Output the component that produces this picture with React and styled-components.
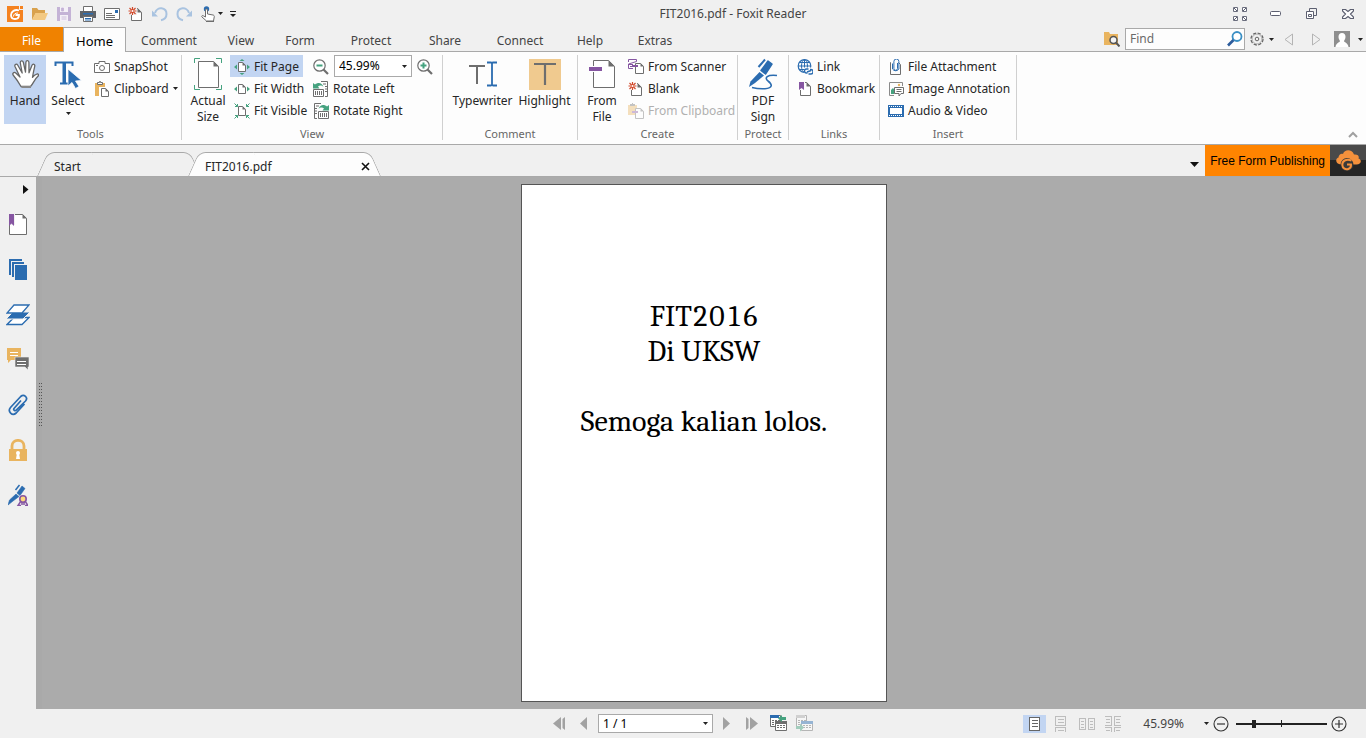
import { useState } from "react";
import styled, { createGlobalStyle, css } from "styled-components";

const GREY = "#6e6e6e";
const GREEN = "#45a27f";
const BLUE = "#2b6cb0";
const ORANGE = "#e9b45f";
const PURPLE = "#8656a2";
const RED = "#d2492a";

const GlobalStyle = createGlobalStyle`
  * {
    box-sizing: border-box;
  }
  body {
    margin: 0;
    background: #f0f0f0;
    color: #262626;
    font-family: "Noto Sans", "Open Sans", sans-serif;
    font-size: 12px;
    line-height: 16px;
  }
  button, input, select {
    margin: 0;
    padding: 0;
    border: 0;
    border-radius: 0;
    background: none;
    color: inherit;
    font: inherit;
  }
  svg {
    display: block;
    flex: none;
  }
`;

const Window = styled.div`
  display: flex;
  flex-direction: column;
  height: 100vh;
`;

/* title bar */
const TitleBar = styled.header`
  display: flex;
  align-items: center;
  height: 27px;
`;
const QuickAccess = styled.div`
  display: flex;
  align-items: center;
  width: 244px;
  padding-left: 1px;
`;
const ToolButton = styled.button`
  display: flex;
  align-items: center;
  justify-content: center;
  gap: ${(p) => p.$gap || 0}px;
  width: ${(p) => p.$width || 24}px;
  height: 24px;
`;
const Title = styled.h1`
  flex: 1;
  margin: 0;
  font-size: 12px;
  font-weight: 400;
  text-align: center;
  color: #444;
`;
const WindowControls = styled.div`
  display: flex;
  align-items: center;
  height: 24px;
`;

/* ribbon tabs */
const TabBar = styled.nav`
  display: flex;
  height: 25px;
  border-bottom: 1px solid #a9a9a9;
`;
const RibbonTab = styled.button`
  width: ${(p) => p.$width}px;
  height: 25px;
  padding-top: 2px;
  color: #444;
  ${(p) =>
    p.$active &&
    css`
      border: 1px solid #a9a9a9;
      border-bottom: 0;
      padding-top: 1px;
      background: #fdfdfd;
      color: #000;
      font-size: 13px;
    `}
`;
const FileTab = styled(RibbonTab)`
  height: 24px;
  padding-top: 3px;
  background: #f08200;
  color: #fff;
`;
const TabTools = styled.div`
  display: flex;
  align-items: center;
  margin-left: auto;
  height: 24px;
`;
const FindBox = styled.label`
  display: flex;
  align-items: center;
  width: 120px;
  height: 22px;
  margin: 0 5px 0 1px;
  padding: 0 1px 0 4px;
  border: 1px solid #a9a9a9;
  background: #fdfdfd;
`;
const FindInput = styled.input`
  flex: 1;
  min-width: 0;
  outline: 0;
  &::placeholder {
    color: #6a6a6a;
    opacity: 1;
  }
`;

/* ribbon */
const Ribbon = styled.section`
  display: flex;
  height: 93px;
  border-bottom: 1px solid #a9a9a9;
  background: #fdfdfd;
`;
const Group = styled.section`
  display: flex;
  flex-direction: column;
  flex: none;
  width: ${(p) => p.$width}px;
  margin: 3px 0 4px;
  border-right: 1px solid #d0d0d0;
`;
const GroupBody = styled.div`
  display: flex;
  flex: none;
  height: 72px;
  padding-left: ${(p) => p.$pad || 4}px;
`;
const GroupLabel = styled.h2`
  margin: 0;
  font-size: 11px;
  font-weight: 400;
  line-height: 13px;
  text-align: center;
  color: #666;
`;
const Column = styled.div`
  display: flex;
  flex-direction: column;
  align-items: flex-start;
  width: ${(p) => (p.$width ? `${p.$width}px` : "auto")};
`;
const Row = styled.div`
  display: flex;
  align-items: center;
  height: 22px;
`;
const SmallButton = styled.button`
  display: flex;
  align-items: center;
  gap: 4px;
  height: 22px;
  padding: 1px 4px 0;
  white-space: nowrap;
  background: ${(p) => (p.$active ? "#c2d5f2" : "none")};
  &:disabled {
    color: #b0b0b0;
  }
`;
const LargeButton = styled.button`
  display: flex;
  flex-direction: column;
  align-items: center;
  gap: 3px;
  flex: none;
  width: ${(p) => p.$width}px;
  height: 69px;
  padding-top: 3px;
  background: ${(p) => (p.$active ? "#c2d5f2" : "none")};
`;
const ComboBox = styled.span`
  display: flex;
  align-items: center;
  width: ${(p) => p.$width}px;
  height: ${(p) => p.$height}px;
  margin: 0 ${(p) => p.$margin || 0}px;
  padding: 0 4px;
  border: 1px solid #a9a9a9;
  background: #fff;
  color: #000;
`;
const ComboSelect = styled.select`
  flex: 1;
  min-width: 0;
  appearance: none;
  outline: 0;
`;
const CollapseRibbon = styled.button`
  align-self: flex-end;
  margin: 0 8px 5px auto;
`;

/* document tabs */
const DocumentBar = styled.div`
  display: flex;
  align-items: flex-end;
  height: 32px;
  border-bottom: 1px solid #a9a9a9;
`;
const DocumentTabs = styled.div`
  display: flex;
  padding-left: 37px;
`;
const DocumentTab = styled.div`
  position: relative;
  isolation: isolate;
  display: flex;
  align-items: center;
  justify-content: space-between;
  width: ${(p) => p.$width}px;
  height: 24px;
  padding: 5px 11px 0 17px;
  & + & {
    margin-left: -13px;
  }
  &::before,
  &::after {
    content: "";
    position: absolute;
    z-index: -1;
    top: 0;
    bottom: 0;
    width: 60%;
    border-top: 1px solid #a9a9a9;
    background: ${(p) => (p.$active ? "#fdfdfd" : "#f0f0f0")};
  }
  &::before {
    left: 0;
    border-left: 1px solid #a9a9a9;
    border-top-left-radius: 7px;
    transform: skewX(-24deg);
    transform-origin: bottom left;
  }
  &::after {
    right: 0;
    border-right: 1px solid #a9a9a9;
    border-top-right-radius: 7px;
    transform: skewX(24deg);
    transform-origin: bottom right;
  }
`;
const Promo = styled.a`
  display: flex;
  align-items: center;
  height: 31px;
  padding: 0 5px;
  background: #ff8400;
  color: #000;
  font-family: "Liberation Sans", Arial, sans-serif;
  text-decoration: none;
  white-space: nowrap;
`;
const PromoLogo = styled.a`
  display: flex;
  align-items: center;
  justify-content: center;
  width: 36px;
  height: 31px;
  background: linear-gradient(#4a4a4a 50%, #252525 50%);
`;
const BarTail = styled.div`
  display: flex;
  align-items: flex-end;
  margin-left: auto;
`;

/* workspace */
const Workspace = styled.main`
  display: flex;
  flex: 1;
  min-height: 0;
`;
const SideBar = styled.aside`
  display: flex;
  flex-direction: column;
  align-items: center;
  width: 36px;
`;
const ExpandButton = styled.button`
  display: flex;
  align-items: center;
  align-self: flex-end;
  height: 25px;
  padding-right: 7px;
`;
const SideButton = styled.button`
  display: flex;
  align-items: center;
  justify-content: center;
  width: 36px;
  height: 45px;
`;
const Splitter = styled.div`
  width: 6px;
  padding: 206px 0 0 3px;
  background: #a9a9a9;
`;
const Canvas = styled.div`
  display: flex;
  justify-content: center;
  flex: 1;
  padding: 7px 0;
  background: #ababab;
  overflow: hidden;
`;
const Page = styled.article`
  width: 366px;
  padding-top: 114px;
  border: 1px solid #555;
  background: #fff;
  color: #000;
  font-family: Cambria, Caladea, "Liberation Serif", serif;
  font-size: 30px;
  font-variant-numeric: lining-nums tabular-nums;
  line-height: 35px;
  text-align: center;
`;
const Line = styled.p`
  min-height: 35px;
  margin: 0;
`;

/* status bar */
const StatusBar = styled.footer`
  display: grid;
  grid-template-columns: 1fr auto 1fr;
  align-items: center;
  height: 29px;
`;
const PageNav = styled.div`
  grid-column: 2;
  display: flex;
  align-items: center;
`;
const ViewTools = styled.div`
  display: flex;
  align-items: center;
  justify-content: flex-end;
  padding-right: 15px;
`;
const ModeButton = styled.button`
  display: flex;
  align-items: center;
  justify-content: center;
  width: 23px;
  height: 18px;
  margin-right: 3px;
  background: ${(p) => (p.$active ? "#c2d5f2" : "none")};
`;
const ZoomValue = styled.button`
  display: flex;
  align-items: center;
  gap: 20px;
  margin: 0 0 0 16px;
  color: #444;
`;
const Slider = styled.input`
  appearance: none;
  width: 91px;
  height: 10px;
  margin: 0 0 0 3px;
  background:
    linear-gradient(#222, #222) 50% 50% / 1px 7px no-repeat,
    linear-gradient(#222, #222) 0 50% / 100% 2px no-repeat;
  &::-webkit-slider-thumb {
    appearance: none;
    width: 4px;
    height: 8px;
    background: #222;
  }
`;

const Icon = ({ w = 16, h = 16, children, ...rest }) => (
  <svg width={w} height={h} viewBox={`0 0 ${w} ${h}`} fill="none" aria-hidden="true" {...rest}>
    {children}
  </svg>
);

const Caret = ({ color = "#222" }) => (
  <Icon w={5} h={3}>
    <path d="M0 0h5L2.500 3z" fill={color} />
  </Icon>
);

const Sheet = ({ x = 0, y = 0, w = 10, h = 12, fold = 4, stroke = GREY, fill = "#fff" }) => (
  <g>
    <path d={`M${x + 0.5} ${y + 0.5}h${w - fold}l${fold} ${fold}v${h - fold}h-${w}z`} fill={fill} stroke={stroke} />
    <path d={`M${x + 0.5 + w - fold} ${y}v${fold + 0.5}h${fold + 0.5}z`} fill={stroke} />
  </g>
);

const Burst = ({ cx, cy, r = 4 }) => (
  <g stroke={RED} strokeWidth="1.2">
    <path d={`M${cx - r} ${cy}h${2 * r}M${cx} ${cy - r}v${2 * r}`} />
    <path d={`M${cx - r + 1} ${cy - r + 1}l${2 * r - 2} ${2 * r - 2}M${cx + r - 1} ${cy - r + 1}l-${2 * r - 2} ${2 * r - 2}`} />
    <circle cx={cx} cy={cy} r="1" fill="#fff" stroke="none" />
  </g>
);

const LogoIcon = () => (
  <Icon>
    <path d="M0 0h12v4h4v12H0z" fill="#f5821f" />
    <path d="M13 0h3v3h-3z" fill="#f5821f" />
    <path d="M12 4.500C8 3 4 5.500 4 9c0 2.500 1.800 4 4 4 2.500 0 4-1.800 4-4H8.500" stroke="#fff" strokeWidth="1.800" />
    <path d="M6.500 10.500C6.500 8 8.500 7 11 7" stroke="#fff" />
  </Icon>
);
const OpenIcon = () => (
  <Icon>
    <path d="M0 14V2h5l1.500 2H13v3H4z" fill="#d9a24e" />
    <path d="M3.500 7H16l-3 7H0z" fill="#f3c982" />
  </Icon>
);
const SaveIcon = () => (
  <Icon w={14} h={14}>
    <path d="M0 0h14v14H0z" fill="#c4b3d6" />
    <path d="M3 0h8v5H3zM3 8h8v6H3z" fill="#f4f0f7" />
    <path d="M4.500 1h2v3h-2zM4.500 10h5M4.500 12h5" fill="#c4b3d6" stroke="#c4b3d6" strokeWidth=".8" />
  </Icon>
);
const PrintIcon = () => (
  <Icon>
    <path d="M3.500 5V.5h9V5" fill="#fff" stroke={GREY} />
    <path d="M0 5h16v7H0z" fill="#5f6368" />
    <path d="M3 7h10v1.500H3z" fill={BLUE} />
    <path d="M3.500 10.500h9v5h-9z" fill="#fff" stroke={GREY} />
    <path d="M5 12.500h6M5 14h6" stroke={BLUE} />
  </Icon>
);
const MailIcon = () => (
  <Icon h={12}>
    <path d="M.5.5h15v11H.5z" fill="#fff" stroke={GREY} />
    <path d="M11 2h3v3h-3z" fill={BLUE} />
    <path d="M2 5.500h6M2 7.500h9M2 9.500h9" stroke={GREY} />
  </Icon>
);
const BlankIcon = ({ back = "#fdfdfd" }) => (
  <Icon>
    <Sheet x={3} y={2} w={10} h={12} />
    <path d="M2 1h7v8H2z" fill={back} />
    <Burst cx={4.500} cy={5} />
  </Icon>
);
const UndoIcon = ({ flip }) => (
  <Icon>
    <g transform={flip ? "translate(16 0) scale(-1 1)" : undefined}>
      <path d="M3 7C4 3.500 7 2 9.500 2.300c3 .4 5 2.700 5 5.700 0 3-2 5.500-5.500 6.200" stroke="#a9c3e0" strokeWidth="2" />
      <path d="M0 4.500v6h6z" fill="#a9c3e0" />
    </g>
  </Icon>
);
const TouchIcon = () => (
  <Icon w={14} h={16}>
    <circle cx="5.500" cy="3" r="2.700" fill={BLUE} />
    <path d="M4.500 11V4c0-1.300 2-1.300 2 0v4l5.500 1c1 .2 1.300.8 1.300 1.500l-.8 4.500H5.500L.8 10.800c-.5-1 .7-1.600 1.500-1z" fill="#fff" stroke={GREY} />
    <path d="M5 15.500h8" stroke={GREY} />
  </Icon>
);
const CustomizeIcon = () => (
  <Icon w={6} h={6}>
    <path d="M0 .5h6" stroke="#222" />
    <path d="M0 3h6L3 6z" fill="#222" />
  </Icon>
);
const FullscreenIcon = () => (
  <Icon w={14} h={14}>
    <path
      d="M.5 4.500v-4h4v4zM9.500 4.500v-4h4v4zM.5 13.500v-4h4v4zM9.500 13.500v-4h4v4z"
      fill="#fff"
      stroke="#6b6e7e"
    />
    <path d="M1 1l3 3M13 1l-3 3M1 13l3-3M13 13l-3-3" stroke="#5c5f70" />
  </Icon>
);
const MinimizeIcon = () => (
  <Icon w={12} h={5}>
    <rect x=".5" y=".5" width="10" height="4" rx="1" fill="#fff" stroke="#5c5f70" />
  </Icon>
);
const RestoreIcon = () => (
  <Icon w={12} h={12}>
    <path d="M3.500 3V.5h7v7H8" stroke="#5c5f70" />
    <path d="M.5 3.500h7v7h-7z" fill="#fff" stroke="#5c5f70" />
    <path d="M2.500 6.500h3v2h-3z" stroke="#5c5f70" />
  </Icon>
);
const CloseIcon = () => (
  <Icon w={12} h={10}>
    <path d="M.5.5h3L6 2.500 8.500.5h3V2L8.500 5l3 3v1.500h-3L6 7.500 3.500 9.500h-3V8l3-3-3-3z" fill="#fff" stroke="#5c5f70" strokeWidth="1.200" />
  </Icon>
);
const FolderFindIcon = () => (
  <Icon>
    <path d="M0 1h5l1 2h8v11H0z" fill={ORANGE} />
    <circle cx="9.500" cy="9" r="3.500" fill="#f4f4f4" stroke="#555" strokeWidth="1.500" />
    <path d="M12 11.500l3.500 4" stroke="#555" strokeWidth="2" />
  </Icon>
);
const SearchIcon = () => (
  <Icon>
    <circle cx="10" cy="5.500" r="4.500" fill="#fff" stroke="#3a8fc4" strokeWidth="1.800" />
    <path d="M6.500 9L1 14.500" stroke="#2c5c9c" strokeWidth="2.600" />
  </Icon>
);
const GearIcon = () => (
  <Icon w={14} h={14}>
    <circle cx="7" cy="7" r="6" stroke="#666" strokeWidth="1.300" strokeDasharray="3.200 1.500" />
    <circle cx="7" cy="7" r="4.900" stroke="#999" strokeWidth=".7" />
    <circle cx="7" cy="7" r="1.800" stroke="#666" />
  </Icon>
);
const OutlineArrow = ({ flip }) => (
  <Icon w={9} h={13}>
    <path d={flip ? "M.5 1v11l7.500-5.500z" : "M8.500 1v11L1 6.500z"} stroke="#b4b4b4" />
  </Icon>
);
const PersonIcon = () => (
  <Icon>
    <path d="M0 0h16v16H0z" fill="#8e8e8e" />
    <path d="M8 2c2.200 0 3.500 1.600 3.500 3.800S10.500 9 10 10c0 1.500 4 1.500 4.500 6h-13C2 11.500 6 11.500 6 10c-.5-1-1.500-2-1.500-4.200S5.800 2 8 2z" fill="#fff" />
  </Icon>
);

const HandIcon = () => (
  <Icon w={28} h={32} viewBox="0 0 28 32">
    <path
      d="M10 28.500C7.500 24 5 20.500 2.500 17.500c-1.700-2 .3-4 2.300-2.500L9 19 4 8.500c-.8-2.200 1.700-3.200 2.800-1.200l4.400 7.700L9.300 5c-.3-2.600 2.500-2.900 3.100-.5L14.500 14l.4-9.700c.2-2.300 3-2.200 3 .1L18 14.800l3-7.500c.9-2 3.300-1 2.700 1.100-1 4.300-1.700 7.600-2.200 10.900 1.500-2 3-2.800 4.500-3.300 1.600-.3 2 1.300.9 2.200-3.400 3-4.400 7-7.400 10.300z"
      fill="#fff"
      stroke="#666"
      strokeWidth="1.300"
      strokeLinejoin="round"
    />
    <path d="M10.500 29h9.500" stroke="#888" strokeWidth="2" />
  </Icon>
);
const SelectIcon = () => (
  <Icon w={28} h={32}>
    <path d="M1.500 8V4.500h17V8M10 5v20M6 25.500h8" stroke={BLUE} strokeWidth="2" />
    <path d="M8.500 5h3.500v20H8.500z" fill={BLUE} />
    <path d="M14 11v17l4-3.500 3.500 6 3.500-2-3.500-5.500 6-.5z" fill={BLUE} stroke="#fff" strokeWidth=".8" />
  </Icon>
);
const CameraIcon = () => (
  <Icon>
    <path d="M.5 4.500H5v-2h6v2h4.500v9H.5z" stroke={GREY} fill="#fff" />
    <circle cx="8" cy="9" r="2.500" stroke={GREY} />
    <path d="M2 6.500h2" stroke={GREY} />
  </Icon>
);
const ClipboardIcon = () => (
  <Icon>
    <path d="M1 2h10v13H1z" fill={ORANGE} />
    <path d="M3.500 3.500v-2h2v-1h1v1h2v2z" fill="#fff" stroke={GREY} />
    <path d="M5 6h11v10H5z" fill="#fff" />
    <Sheet x={7} y={7} w={7} h={8} fold={3} />
  </Icon>
);
const ActualSizeIcon = () => (
  <Icon w={28} h={32}>
    <path d="M.5 5V.5H6M22 .5h5.500V5M.5 27v4.500H6M22 31.500h5.500V27" stroke={GREEN} />
    <Sheet x={4} y={3} w={20} h={26} fold={5} />
  </Icon>
);
const FitIcon = ({ kind }) => (
  <Icon>
    <Sheet x={4} y={3} w={7} h={9} fold={3} />
    {kind !== "visible" && <path d="M3 5.500v5L0 8zM13 5.500v5L16 8z" fill={GREEN} />}
    {kind === "page" && <path d="M5.500 2h5L8 0zM5.500 14h5L8 16z" fill={GREEN} />}
    {kind === "visible" && (
      <path
        d="M.5.5l3 3M3.500 1v2.500H1M15.500.5l-3 3M12.500 1v2.500H15M.5 15.500l3-3M3.500 15v-2.500H1M15.500 15.500l-3-3M12.500 15v-2.500H15"
        stroke={GREEN}
      />
    )}
  </Icon>
);
const ZoomIcon = ({ plus }) => (
  <Icon>
    <circle cx="6.500" cy="6.500" r="5.700" fill="#fff" stroke={GREY} strokeWidth="1.200" />
    <path d={plus ? "M3.500 6.500h6M6.500 3.500v6" : "M3.500 6.500h6"} stroke={GREEN} strokeWidth="2" />
    <path d="M10.500 10.500L15 15" stroke={GREY} strokeWidth="2.200" />
  </Icon>
);
const RotateIcon = ({ right }) => (
  <Icon>
    <g transform={right ? "translate(16 0) scale(-1 1)" : undefined}>
      <path d="M8 .5h6.500v15H12M10 3h3M12 5.500h2M12 8h2M12 10.500h2" stroke={GREY} />
      <path d="M.5 8.500h10v7H.5z" fill="#fff" stroke={GREY} />
      <path d="M2.500 10v4M4.500 10v4M6.500 10v4M8.500 10v4" stroke={GREY} />
      <path d="M0 2l2 1.500C5 1 9 1.500 10.500 6 8.500 4 6.500 4.300 5 5.500L6.500 7.500H0z" fill={GREEN} />
    </g>
  </Icon>
);
const TypewriterIcon = () => (
  <Icon w={28} h={32}>
    <path d="M0 8h16M8 8v18" stroke={GREY} strokeWidth="2" />
    <path d="M18 4.500h4q1 0 1 1.500 0-1.500 1-1.500h4M23 5v22M18 27.500h4q1 0 1-1.500 0 1.500 1 1.500h4" stroke={BLUE} strokeWidth="1.800" />
  </Icon>
);
const HighlightIcon = () => (
  <Icon w={32} h={32}>
    <path d="M0 1h32v31H0z" fill="#f0ca8f" />
    <path d="M5 6h22M16 6v21" stroke={GREY} strokeWidth="2.200" />
  </Icon>
);
const FromFileIcon = () => (
  <Icon w={26} h={32}>
    <Sheet x={4} y={2} w={21} h={27} fold={6} />
    <path d="M0 8h14v6H0z" fill="#fff" />
    <path d="M0 9h13v4H0z" fill={PURPLE} />
  </Icon>
);
const ScannerIcon = () => (
  <Icon>
    <path d="M.5 3V.5h8v2L.5 5" stroke={PURPLE} />
    <path d="M0 5.500h5M.5 6v3.500h4.500M2 7.500h2" stroke={PURPLE} />
    <Sheet x={7} y={4} w={8} h={10} fold={3} />
    <path d="M4 6h6v2H4z" fill={PURPLE} />
  </Icon>
);
const FromClipboardIcon = () => (
  <Icon opacity=".4">
    <path d="M0 2h9v10H0z" fill={ORANGE} />
    <path d="M2 3V1h2V0h1v1h2v2z" fill={GREY} />
    <Sheet x={7} y={5} w={8} h={10} fold={3} />
    <path d="M4 8h6v2H4z" fill={PURPLE} />
  </Icon>
);
const SignIcon = () => (
  <Icon w={30} h={32}>
    <path d="M20 3l4 3-6.500 10-4.500-3.500z" fill={BLUE} stroke={BLUE} strokeWidth="1.500" strokeLinejoin="round" />
    <path d="M11.500 14l4.500 3.500L7 25 1 29l1.500-5.500z" fill={BLUE} />
    <path d="M17 1.500L10.500 9" stroke={BLUE} strokeWidth="2" />
    <path d="M29 17.500c-10-1-13 2-9 5.500 4.500 3.500 5 7-3 7.700-5 .3-9-.2-13-1.200" stroke={BLUE} strokeWidth="1.600" />
  </Icon>
);
const LinkIcon = () => (
  <Icon>
    <circle cx="7.500" cy="7" r="6.300" stroke={BLUE} strokeWidth="1.200" />
    <ellipse cx="7.500" cy="7" rx="3" ry="6.300" stroke={BLUE} />
    <path d="M1 7h13M2.500 3.500h10M2.500 10.500h6M7.500 1v12" stroke={BLUE} />
    <path d="M7 8.500h9V16H7z" fill="#fdfdfd" />
    <path d="M10.500 14H9.500a1.800 1.800 0 010-4h2M13 10.500h.8a1.800 1.800 0 010 4.500h-2.300M10 13l4-1.500" stroke={BLUE} strokeWidth="1.400" />
  </Icon>
);
const BookmarkIcon = () => (
  <Icon>
    <Sheet x={3} y={1} w={10} h={13} />
    <path d="M1 0h7v9H1z" fill="#fdfdfd" />
    <path d="M2 1h5v8L4.500 7 2 9z" fill={PURPLE} />
  </Icon>
);
const AttachmentIcon = () => (
  <Icon>
    <path d="M3 3.500H2.500v12h10v-10L10.500 3.500" stroke={GREY} />
    <path d="M9.500 4v5.500a1.800 1.800 0 01-3.600 0v-7a2.500 2.500 0 015 0V10a3.800 3.800 0 01-6.400 0V4.500" stroke={BLUE} />
  </Icon>
);
const ImageIcon = () => (
  <Icon>
    <path d="M6 14.500H1.500v-13h13V5" stroke="#8a8a8a" />
    <circle cx="11" cy="4" r="1.200" fill={ORANGE} />
    <path d="M3 13V9l2-2 1.500 2v4z" fill={GREEN} />
    <path d="M6.500 6.500h9v6H13l-2 2.500v-2.500H6.500z" fill="#fff" stroke={GREY} />
    <path d="M8.500 8.500h5M8.500 10.500h5" stroke={GREY} />
  </Icon>
);
const VideoIcon = () => (
  <Icon>
    <path d="M0 2h16v12H0z" fill={BLUE} />
    <path d="M2 5h12v6H2z" fill="#fff" />
    <path d="M1 3.500h14M1 12.500h14" stroke="#fff" strokeDasharray="1 1" />
  </Icon>
);

const PagesIcon = () => (
  <Icon w={18} h={22}>
    <Sheet x={0} y={0} w={17} h={20} />
    <path d="M0 0h6v11H0z" fill="#f0f0f0" />
    <path d="M0 0h5v12L2.500 9.500 0 12z" fill={PURPLE} />
  </Icon>
);
const ThumbsIcon = () => (
  <Icon w={18} h={21}>
    <path d="M1 16V1h12M4 18V4h11" stroke={BLUE} strokeWidth="2" />
    <path d="M6 6h12v15H6z" fill={BLUE} />
  </Icon>
);
const LayersIcon = () => (
  <Icon w={24} h={22}>
    <path d="M8 13.500h15l-7 7H1z" fill="#fff" stroke={BLUE} strokeWidth="1.300" />
    <path d="M7 8h17l-7 7H0z" fill={BLUE} stroke="#f0f0f0" />
    <path d="M8 1h15l-7 8H1z" fill="#fff" stroke={BLUE} strokeWidth="1.300" />
  </Icon>
);
const CommentsIcon = () => (
  <Icon w={22} h={23}>
    <path d="M0 0h14v12H4l-3 3v-3H0z" fill={ORANGE} />
    <path d="M8 9h14v10h-1v3l-3-3H8z" fill={GREY} stroke="#f0f0f0" strokeWidth=".6" />
    <path d="M3 4.500h8M3 7.500h8M10 13.500h9M10 16.500h9" stroke="#fff" />
  </Icon>
);
const ClipIcon = () => (
  <Icon w={20} h={22}>
    <path d="M13 6.500L6 14.500c-1 1.500 1 3 2.300 1.700L17.500 7c3-3.500-1.500-7.500-4.800-4.500L2.500 13.500c-3.300 4 1.700 9 5.700 5.500l8.300-9" stroke={BLUE} strokeWidth="1.700" />
  </Icon>
);
const LockIcon = () => (
  <Icon w={18} h={22}>
    <path d="M3 11V7c0-7.500 12-7.500 12 0v4" stroke={ORANGE} strokeWidth="2.800" />
    <path d="M0 10h18v12H0z" fill={ORANGE} />
    <circle cx="9" cy="14" r="2" fill="#fff" />
    <path d="M8 14h2l1 6H7z" fill="#fff" />
  </Icon>
);
const CertificateIcon = () => (
  <Icon w={20} h={22}>
    <path d="M14 2l3 2.500-5 7L9 9zM8 10l3 2.500L5 17l-5 4 1.500-5z" fill={BLUE} stroke={BLUE} strokeWidth=".6" />
    <path d="M11.500 1L7.500 6" stroke={BLUE} strokeWidth="1.500" />
    <path d="M13 17l-3 4.500h3M17 17l3 4.500h-3M14 18v3M16 18v3" stroke={PURPLE} strokeWidth="1.500" />
    <circle cx="15" cy="15" r="3.200" fill="#ffd97a" stroke={PURPLE} strokeWidth="1.600" />
  </Icon>
);
const GripIcon = () => (
  <Icon w={3} h={44}>
    <path d="M.5 0v44M2.500 0v44" stroke="#555" strokeDasharray="1 2" />
  </Icon>
);
const CloudIcon = () => (
  <Icon w={26} h={22}>
    <path d="M6 14.500C1 14.500-.5 9 3.500 7.500 3.500 4 7 3 8 4c1.500-5 9-5 11 .5 4-.5 5.500 2 4.500 4 4 1.500 2.500 6-2 6z" fill="#f5913c" />
    <circle cx="12" cy="14.500" r="6.500" fill="#3a3a3a" />
    <path d="M16.500 10.500c-5.500-2-9.500.5-9.200 4.500.3 3.600 3.500 5 6 4 2-.8 2.900-2.500 2.700-4.500h-4" stroke="#f5913c" strokeWidth="2" />
  </Icon>
);

const NavIcon = ({ double, flip }) => (
  <Icon w={13} h={13}>
    <g transform={flip ? "translate(13 0) scale(-1 1)" : undefined} fill="#a2a2a2">
      <path d={double ? "M8 0v13L0 6.500z" : "M10 0v13L3 6.500z"} />
      {double && <path d="M12 0v13l-2.500-2V2z" />}
    </g>
  </Icon>
);
const HistoryIcon = ({ next }) => (
  <Icon w={17} h={17} opacity={next ? 0.45 : 1}>
    <path d="M.5.500h10v11H.5z" fill="#fff" stroke={GREY} />
    <path d="M0 0h9v3H0z" fill={next ? "#aaa" : BLUE} />
    <path d="M2 5.500h8M2 7.500h4M2 9.500h4" stroke={GREY} strokeDasharray="2 1" />
    <path d="M5.500 6.500h11v9h-11z" fill="#fff" stroke={GREY} />
    <path d="M5 6h12v3H5z" fill={next ? BLUE : GREY} />
    <path d="M7 10.500h8M7 12.500h8" stroke={GREY} strokeDasharray="2 1" />
    {next ? (
      <path d="M0 11h4V8.500l4 4-4 4V14H0z" fill={GREEN} />
    ) : (
      <path d="M8 3.500l4-3.500v2h4v3h-4v2z" fill={GREEN} />
    )}
  </Icon>
);
const ModeIcon = ({ kind }) => (
  <Icon shapeRendering="crispEdges" stroke={kind === "single" ? "#666" : "#bdbdbd"}>
    {kind === "single" && <path d="M2.500 1.500h10v13h-10zM5 4.500h6M5 7.500h6M5 10.500h6" fill="#fff" />}
    {kind === "continuous" && <path d="M2.500.5h10v9h-10zM5 3.500h6M5 6.500h6M2.500 16v-4.500h10V16M5 14.500h6" />}
    {kind === "facing" && <path d="M.5 2.500h6v11h-6zM9.500 2.500h6v11h-6zM2 5.500h3M2 8.500h3M2 11.500h3M11 5.500h3M11 8.500h3M11 11.500h3" />}
    {kind === "both" && <path d="M0 .5h6.500v9H0M16 .5H9.500v9H16M1 3.500h4M1 6.500h4M11 3.500h4M11 6.500h4M0 11.500h6.500V16M16 11.500H9.500V16M1 14.500h4M11 14.500h4" />}
  </Icon>
);
const RoundIcon = ({ plus }) => (
  <Icon>
    <circle cx="8" cy="8" r="7" stroke="#333" strokeWidth="1.100" />
    <path d={plus ? "M4 8h8M8 4v8" : "M4 8h8"} stroke="#333" strokeWidth="1.200" />
  </Icon>
);

const ribbonTabs = [
  ["Home", 63],
  ["Comment", 86],
  ["View", 58],
  ["Form", 60],
  ["Protect", 82],
  ["Share", 66],
  ["Connect", 84],
  ["Help", 56],
  ["Extras", 74],
];

const quickTools = [
  ["Open", <OpenIcon />],
  ["Save", <SaveIcon />],
  ["Print", <PrintIcon />],
  ["Email", <MailIcon />],
  ["New blank", <BlankIcon back="#f0f0f0" />],
  ["Undo", <UndoIcon />],
  ["Redo", <UndoIcon flip />],
];

const sidePanels = [
  ["Bookmarks", <PagesIcon />],
  ["Page thumbnails", <ThumbsIcon />],
  ["Layers", <LayersIcon />],
  ["Comments", <CommentsIcon />],
  ["Attachments", <ClipIcon />],
  ["Security", <LockIcon />],
  ["Signatures", <CertificateIcon />],
];

const pageText = ["FIT2016", "Di UKSW", "", "Semoga kalian lolos."];

const RibbonGroup = ({ label, width, pad, children }) => (
  <Group $width={width} aria-label={label}>
    <GroupBody $pad={pad}>{children}</GroupBody>
    <GroupLabel>{label}</GroupLabel>
  </Group>
);

const Small = ({ icon, label, caret, ...rest }) => (
  <SmallButton {...rest}>
    {icon}
    <span>{label}</span>
    {caret && <Caret />}
  </SmallButton>
);

const Large = ({ icon, lines, caret, ...rest }) => (
  <LargeButton {...rest}>
    {icon}
    <span>
      {lines[0]}
      {lines[1] && <br />}
      {lines[1]}
    </span>
    {caret && <Caret />}
  </LargeButton>
);

function App() {
  const [activeTab, setActiveTab] = useState("Home");
  const [mode, setMode] = useState("single");
  const [zoom, setZoom] = useState(18);

  return (
    <Window>
      <GlobalStyle />
      <TitleBar>
        <QuickAccess>
          <ToolButton aria-label="Foxit Reader" $width={27}>
            <LogoIcon />
          </ToolButton>
          {quickTools.map(([name, icon]) => (
            <ToolButton key={name} aria-label={name}>
              {icon}
            </ToolButton>
          ))}
          <ToolButton aria-label="Touch mode" $width={31} $gap={3}>
            <TouchIcon />
            <Caret />
          </ToolButton>
          <ToolButton aria-label="Customize toolbar" $width={12}>
            <CustomizeIcon />
          </ToolButton>
        </QuickAccess>
        <Title>FIT2016.pdf - Foxit Reader</Title>
        <WindowControls>
          <ToolButton aria-label="Full screen" $width={36}>
            <FullscreenIcon />
          </ToolButton>
          <ToolButton aria-label="Minimize" $width={36}>
            <MinimizeIcon />
          </ToolButton>
          <ToolButton aria-label="Restore" $width={36}>
            <RestoreIcon />
          </ToolButton>
          <ToolButton aria-label="Close" $width={36}>
            <CloseIcon />
          </ToolButton>
        </WindowControls>
      </TitleBar>

      <TabBar>
        <FileTab $width={63}>File</FileTab>
        {ribbonTabs.map(([name, width]) => (
          <RibbonTab key={name} $width={width} $active={name === activeTab} onClick={() => setActiveTab(name)}>
            {name}
          </RibbonTab>
        ))}
        <TabTools>
          <ToolButton aria-label="Search folder">
            <FolderFindIcon />
          </ToolButton>
          <FindBox>
            <FindInput type="text" placeholder="Find" aria-label="Find" />
            <SearchIcon />
          </FindBox>
          <ToolButton aria-label="Options" $gap={5}>
            <GearIcon />
            <Caret />
          </ToolButton>
          <ToolButton aria-label="Previous" $width={28}>
            <OutlineArrow />
          </ToolButton>
          <ToolButton aria-label="Next" $width={28}>
            <OutlineArrow flip />
          </ToolButton>
          <ToolButton aria-label="Account" $width={36} $gap={8}>
            <PersonIcon />
            <Caret />
          </ToolButton>
        </TabTools>
      </TabBar>

      <Ribbon>
        <RibbonGroup label="Tools" width={182}>
          <Large icon={<HandIcon />} lines={["Hand"]} $width={42} $active />
          <Large icon={<SelectIcon />} lines={["Select"]} $width={44} caret />
          <Column>
            <Small icon={<CameraIcon />} label="SnapShot" />
            <Small icon={<ClipboardIcon />} label="Clipboard" caret />
          </Column>
        </RibbonGroup>
        <RibbonGroup label="View" width={261}>
          <Large icon={<ActualSizeIcon />} lines={["Actual", "Size"]} $width={44} />
          <Column $width={79}>
            <Small icon={<FitIcon kind="page" />} label="Fit Page" $active />
            <Small icon={<FitIcon kind="width" />} label="Fit Width" />
            <Small icon={<FitIcon kind="visible" />} label="Fit Visible" />
          </Column>
          <Column>
            <Row>
              <SmallButton aria-label="Zoom out">
                <ZoomIcon />
              </SmallButton>
              <ComboBox $width={78} $height={22} $margin={1}>
                <ComboSelect aria-label="Zoom">
                  <option>45.99%</option>
                </ComboSelect>
                <Caret />
              </ComboBox>
              <SmallButton aria-label="Zoom in">
                <ZoomIcon plus />
              </SmallButton>
            </Row>
            <Small icon={<RotateIcon />} label="Rotate Left" />
            <Small icon={<RotateIcon right />} label="Rotate Right" />
          </Column>
        </RibbonGroup>
        <RibbonGroup label="Comment" width={135} pad={6}>
          <Large icon={<TypewriterIcon />} lines={["Typewriter"]} $width={67} />
          <Large icon={<HighlightIcon />} lines={["Highlight"]} $width={57} />
        </RibbonGroup>
        <RibbonGroup label="Create" width={160} pad={2}>
          <Large icon={<FromFileIcon />} lines={["From", "File"]} $width={44} />
          <Column>
            <Small icon={<ScannerIcon />} label="From Scanner" />
            <Small icon={<BlankIcon />} label="Blank" />
            <Small icon={<FromClipboardIcon />} label="From Clipboard" disabled />
          </Column>
        </RibbonGroup>
        <RibbonGroup label="Protect" width={51}>
          <Large icon={<SignIcon />} lines={["PDF", "Sign"]} $width={42} />
        </RibbonGroup>
        <RibbonGroup label="Links" width={91}>
          <Column>
            <Small icon={<LinkIcon />} label="Link" />
            <Small icon={<BookmarkIcon />} label="Bookmark" />
          </Column>
        </RibbonGroup>
        <RibbonGroup label="Insert" width={137}>
          <Column>
            <Small icon={<AttachmentIcon />} label="File Attachment" />
            <Small icon={<ImageIcon />} label="Image Annotation" />
            <Small icon={<VideoIcon />} label="Audio & Video" />
          </Column>
        </RibbonGroup>
        <CollapseRibbon aria-label="Collapse ribbon">
          <Icon w={10} h={8}>
            <path d="M1 6l4-4 4 4" stroke="#a0a0a0" strokeWidth="2" />
          </Icon>
        </CollapseRibbon>
      </Ribbon>

      <DocumentBar>
        <DocumentTabs>
          <DocumentTab $width={164}>Start</DocumentTab>
          <DocumentTab $width={193} $active>
            FIT2016.pdf
            <button aria-label="Close tab">
              <Icon w={9} h={9}>
                <path d="M1 1l7 7M8 1L1 8" stroke="#111" strokeWidth="1.600" />
              </Icon>
            </button>
          </DocumentTab>
        </DocumentTabs>
        <BarTail>
          <ToolButton aria-label="Open documents" $width={22}>
            <Icon w={9} h={5}>
              <path d="M0 0h9L4.500 5z" fill="#111" />
            </Icon>
          </ToolButton>
          <Promo href="#publishing">Free Form Publishing</Promo>
          <PromoLogo href="#cloud" aria-label="Foxit Cloud">
            <CloudIcon />
          </PromoLogo>
        </BarTail>
      </DocumentBar>

      <Workspace>
        <SideBar>
          <ExpandButton aria-label="Expand panel">
            <Icon w={6} h={9}>
              <path d="M0 0l5.500 4.500L0 9z" fill="#111" />
            </Icon>
          </ExpandButton>
          {sidePanels.map(([name, icon]) => (
            <SideButton key={name} aria-label={name}>
              {icon}
            </SideButton>
          ))}
        </SideBar>
        <Splitter>
          <GripIcon />
        </Splitter>
        <Canvas>
          <Page>
            {pageText.map((line, index) => (
              <Line key={index}>{line}</Line>
            ))}
          </Page>
        </Canvas>
      </Workspace>

      <StatusBar>
        <PageNav>
          <ToolButton aria-label="First page">
            <NavIcon double />
          </ToolButton>
          <ToolButton aria-label="Previous page">
            <NavIcon />
          </ToolButton>
          <ComboBox $width={115} $height={19} $margin={3}>
            <ComboSelect aria-label="Page">
              <option>1 / 1</option>
            </ComboSelect>
            <Caret />
          </ComboBox>
          <ToolButton aria-label="Next page" $width={20}>
            <NavIcon flip />
          </ToolButton>
          <ToolButton aria-label="Last page" $width={30}>
            <NavIcon double flip />
          </ToolButton>
          <ToolButton aria-label="Previous view">
            <HistoryIcon />
          </ToolButton>
          <ToolButton aria-label="Next view" $width={29}>
            <HistoryIcon next />
          </ToolButton>
        </PageNav>
        <ViewTools>
          {["single", "continuous", "facing", "both"].map((kind) => (
            <ModeButton key={kind} aria-label={kind} $active={kind === mode} onClick={() => setMode(kind)}>
              <ModeIcon kind={kind} />
            </ModeButton>
          ))}
          <ZoomValue>
            45.99%
            <Caret />
          </ZoomValue>
          <ToolButton aria-label="Zoom out">
            <RoundIcon />
          </ToolButton>
          <Slider type="range" aria-label="Zoom level" value={zoom} onChange={(e) => setZoom(e.target.value)} />
          <ToolButton aria-label="Zoom in">
            <RoundIcon plus />
          </ToolButton>
        </ViewTools>
      </StatusBar>
    </Window>
  );
}

export default App;
